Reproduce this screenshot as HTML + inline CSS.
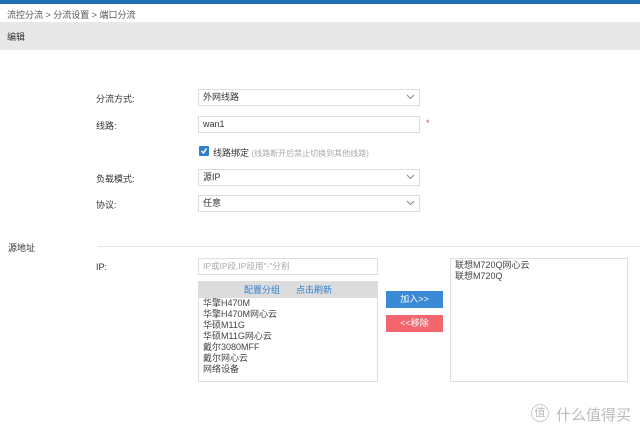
<!DOCTYPE html>
<html><head><meta charset="utf-8"><style>
*{margin:0;padding:0;box-sizing:border-box}
body{width:640px;height:431px;background:#fff;font-family:"Liberation Sans","Noto Sans CJK SC",sans-serif;font-size:9px;color:#333;position:relative;overflow:hidden}
.a{position:absolute}
.sel{position:absolute;left:198px;width:222px;height:17px;border:1px solid #ddd;padding-left:4px;line-height:15px}
.sel svg{position:absolute;right:4px;top:4px}
.lab{position:absolute;left:96px}
</style></head><body>
<div class="a" style="left:0;top:0;width:640px;height:4px;background:#1f6fb2"></div>
<div class="a" style="left:7px;top:8px;color:#555">流控分流 &gt; 分流设置 &gt; 端口分流</div>
<div class="a" style="left:0;top:22px;width:640px;height:28px;background:#e8e8e8"></div>
<div class="a" style="left:7px;top:30px;color:#333">编辑</div>

<div class="lab" style="top:92px">分流方式:</div>
<div class="sel" style="top:89px">外网线路<svg width="9" height="6"><path d="M1 1l3.5 3.5L8 1" stroke="#888" fill="none"/></svg></div>
<div class="lab" style="top:119px">线路:</div>
<div class="sel" style="top:116px">wan1</div>
<div class="a" style="left:426px;top:118px;color:#e44">*</div>
<div class="a" style="left:199px;top:146px;width:10px;height:10px;background:#2d7fd0;border-radius:1px"><svg width="10" height="10"><path d="M2.5 5l2 2 3-4.5" stroke="#fff" stroke-width="1.5" fill="none"/></svg></div>
<div class="a" style="left:213px;top:146px">线路绑定 <span style="color:#aaa;font-size:8px">(线路断开后禁止切换到其他线路)</span></div>
<div class="lab" style="top:172px">负载模式:</div>
<div class="sel" style="top:169px">源IP<svg width="9" height="6"><path d="M1 1l3.5 3.5L8 1" stroke="#888" fill="none"/></svg></div>
<div class="lab" style="top:198px">协议:</div>
<div class="sel" style="top:195px">任意<svg width="9" height="6"><path d="M1 1l3.5 3.5L8 1" stroke="#888" fill="none"/></svg></div>

<div class="a" style="left:8px;top:241px">源地址</div>
<div class="a" style="left:98px;top:246px;width:542px;height:1px;background:#e6e6e6"></div>
<div class="lab" style="top:262px">IP:</div>
<div class="a" style="left:198px;top:258px;width:180px;height:17px;border:1px solid #ddd;padding-left:4px;line-height:15px;color:#aaa;font-size:8.5px">IP或IP段,IP段用"-"分割</div>

<div class="a" style="left:198px;top:281px;width:180px;height:101px;border:1px solid #ddd">
<div style="height:16px;background:#dcdcdc;color:#2d7fd0;text-align:center;line-height:16px"><span style="margin-right:16px">配置分组</span>点击刷新</div>
<div style="padding-left:4px;line-height:11px;color:#444">华擎H470M<br>华擎H470M网心云<br>华硕M11G<br>华硕M11G网心云<br>戴尔3080MFF<br>戴尔网心云<br>网络设备</div>
</div>
<div class="a" style="left:386px;top:291px;width:57px;height:17px;background:#3b8ad6;color:#fff;text-align:center;line-height:17px">加入&gt;&gt;</div>
<div class="a" style="left:386px;top:315px;width:57px;height:17px;background:#f4666e;color:#fff;text-align:center;line-height:17px">&lt;&lt;移除</div>
<div class="a" style="left:450px;top:258px;width:178px;height:124px;border:1px solid #ddd;padding:1px 4px;line-height:11px;color:#444">联想M720Q网心云<br>联想M720Q</div>

<div class="a" style="left:531px;top:404px;width:18px;height:18px;border:1px solid #ccc;border-radius:50%;color:#bbb;font-size:11px;text-align:center;line-height:16px">值</div>
<div class="a" style="left:556px;top:404px;color:#bbb;font-size:15px">什么值得买</div>
</body></html>
